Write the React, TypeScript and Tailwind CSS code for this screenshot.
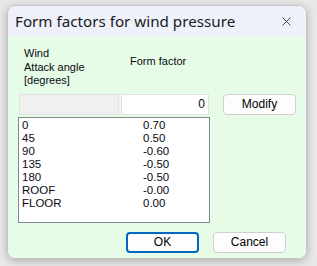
import { X } from 'lucide-react';

const rows: [string, string][] = [
  ['0', '0.70'],
  ['45', '0.50'],
  ['90', '-0.60'],
  ['135', '-0.50'],
  ['180', '-0.50'],
  ['ROOF', '-0.00'],
  ['FLOOR', '0.00'],
];

function DlgButton({ label, primary }: { label: string; primary?: boolean }) {
  return (
    <button
      className={
        'w-[73px] h-[21px] rounded-[4px] bg-[#fdfdfd] text-[12px] leading-none text-black ' +
        (primary ? 'border-2 border-[#0067c0]' : 'border border-[#d0d0d0]')
      }
    >
      {label}
    </button>
  );
}

export default function App() {
  return (
    <div className="w-[317px] h-[266px] bg-[#e8e8e8] pt-[5px] pl-[7px] font-['Liberation_Sans',Arial,sans-serif]">
      <div className="w-[300px] h-[254px] rounded-[8px] border border-[#c4c4c4] overflow-hidden flex flex-col shadow-[0_2px_8px_rgba(0,0,0,0.25)]">
        {/* title bar */}
        <div className="h-[30px] bg-[#eef1fa] flex items-center justify-between pl-[7px] pr-[12px]">
          <span className="text-[15.2px] text-[#1a1a1a] font-['Noto_Sans',sans-serif]">
            Form factors for wind pressure
          </span>
          <X size={15} strokeWidth={1.3} className="text-[#222]" />
        </div>

        {/* body */}
        <div className="flex-1 bg-[#e6fce6] pl-[10px] pt-[11px] text-[11px] text-[#0a0a14]">
          <div className="flex leading-[13.5px]">
            <div className="w-[112px] pl-[6px]">
              <div>Wind</div>
              <div>Attack angle</div>
              <div>[degrees]</div>
            </div>
            <div className="pt-[8px]">Form factor</div>
          </div>

          <div className="flex mt-[6px] gap-[13px]">
            <div className="w-[192px] flex flex-col">
              <div className="flex gap-[2px] pl-[1px]">
                <div className="w-[100px] h-[21px] bg-[#f0f0f0] border border-[#e2e2e2]" />
                <div className="w-[88px] h-[21px] bg-white border border-[#e2e2e2] flex items-center justify-end pr-[3px] text-[12px]">
                  0
                </div>
              </div>
              <div className="mt-[2px] h-[106px] bg-white border border-[#828790] pl-[3px] pt-[1px] text-[11.5px] leading-[13px]">
                {rows.map(([a, v]) => (
                  <div key={a} className="flex">
                    <span className="w-[121px]">{a}</span>
                    <span>{v}</span>
                  </div>
                ))}
              </div>
            </div>
            <div>
              <DlgButton label="Modify" />
            </div>
          </div>

          <div className="flex gap-[14px] mt-[9px] pl-[108px]">
            <DlgButton label="OK" primary />
            <DlgButton label="Cancel" />
          </div>
        </div>
      </div>
    </div>
  );
}
